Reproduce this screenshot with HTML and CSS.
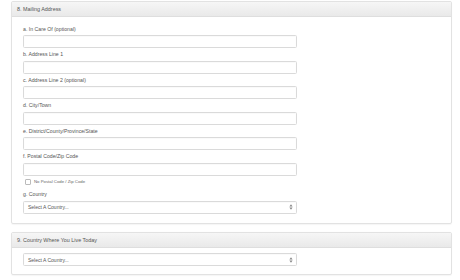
FILE: index.html
```html
<!DOCTYPE html>
<html lang="en">
<head>
<meta charset="utf-8">
<meta name="viewport" content="width=device-width, initial-scale=1">
<title>Mailing Address</title>
<link rel="stylesheet" href="styles.css">
</head>
<body>

<div class="panel">
  <div class="panel-heading">8. Mailing Address</div>
  <div class="panel-body">
    <div class="form-group">
      <label>a. In Care Of (optional)</label>
      <input class="form-control" type="text">
    </div>
    <div class="form-group">
      <label>b. Address Line 1</label>
      <input class="form-control" type="text">
    </div>
    <div class="form-group">
      <label>c. Address Line 2 (optional)</label>
      <input class="form-control" type="text">
    </div>
    <div class="form-group">
      <label>d. City/Town</label>
      <input class="form-control" type="text">
    </div>
    <div class="form-group">
      <label>e. District/County/Province/State</label>
      <input class="form-control" type="text">
    </div>
    <div class="form-group">
      <label>f. Postal Code/Zip Code</label>
      <input class="form-control" type="text">
    </div>
    <div class="checkbox">
      <span class="box"></span>
      <span>No Postal Code / Zip Code</span>
    </div>
    <div class="form-group last">
      <label>g. Country</label>
      <div class="form-control select">
        <span>Select A Country...</span>
        <svg width="4" height="6" viewBox="0 0 4 6"><path d="M2 0.3 L3.6 2.4 H0.4 Z M2 5.7 L3.6 3.6 H0.4 Z" fill="#888"/></svg>
      </div>
    </div>
  </div>
</div>

<div class="panel">
  <div class="panel-heading">9. Country Where You Live Today</div>
  <div class="panel-body short">
    <div class="form-control select">
      <span>Select A Country...</span>
      <svg width="4" height="6" viewBox="0 0 4 6"><path d="M2 0.3 L3.6 2.4 H0.4 Z M2 5.7 L3.6 3.6 H0.4 Z" fill="#888"/></svg>
    </div>
  </div>
</div>

</body>
</html>
```

FILE: styles.css
```css
body {
  margin: 0;
  padding: 1px 8px 0 11px;
  font-family: "Liberation Sans", Arial, sans-serif;
  color: #444;
  background: #fff;
}
.panel {
  border: 1px solid #e2e2e2;
  border-radius: 2px;
  margin-bottom: 8px;
  box-shadow: 0 0.5px 1px rgba(0,0,0,0.04);
}
.panel-heading {
  height: 14px;
  line-height: 14px;
  padding-left: 5px;
  font-size: 5.4px;
  color: #555;
  background: linear-gradient(#f6f6f6, #e9e9e9);
  border-bottom: 1px solid #dedede;
}
.panel-body { padding: 8.5px 11px 9px; }
.panel-body.short { padding: 5.5px 11px 8px; }
.form-group { margin-bottom: 3px; }
.form-group.last { margin-bottom: 0; }
.form-group label {
  display: block;
  height: 7px;
  line-height: 7px;
  margin-bottom: 2.5px;
  font-size: 5.2px;
  color: #555;
}
.form-control {
  display: block;
  box-sizing: border-box;
  width: 274px;
  height: 13px;
  margin: 0;
  padding: 0 4px;
  border: 1px solid #dadada;
  border-radius: 1.5px;
  background: #fff;
  box-shadow: inset 0 0.5px 1px rgba(0,0,0,0.04);
  font-family: inherit;
}
.select {
  display: flex;
  align-items: center;
  justify-content: space-between;
  font-size: 5px;
  color: #555;
  padding: 0 3px 0 4px;
}
.checkbox {
  display: flex;
  align-items: center;
  gap: 3px;
  height: 6px;
  margin: 0 0 6.5px 2px;
  font-size: 4.3px;
  color: #666;
}
.checkbox .box {
  width: 4px;
  height: 4px;
  border: 0.8px solid #bbb;
  border-radius: 1px;
  background: #fff;
}
```
